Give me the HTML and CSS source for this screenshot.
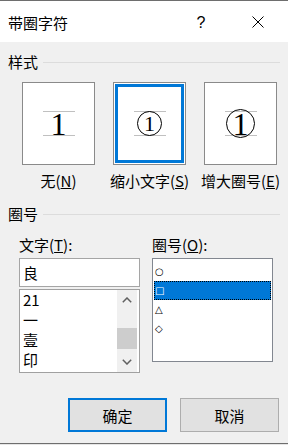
FILE: index.html
```html
<!DOCTYPE html>
<html lang="zh-CN">
<head>
  <meta charset="UTF-8">
  <title>带圈字符</title>
  <link rel="stylesheet" href="styles.css">
</head>
<body>
  <div class="dialog">
    <div class="titlebar">
      <span class="title">带圈字符</span>
      <span class="help">?</span>
      <span class="close">
        <svg width="12" height="12" viewBox="0 0 12 12"><path d="M0.5 0.5 L11.5 11.5 M11.5 0.5 L0.5 11.5" stroke="#000" stroke-width="1" fill="none"/></svg>
      </span>
    </div>

    <div class="content">
      <div class="group-head"><span>样式</span><div class="rule"></div></div>
      <div class="styles">
        <div class="opt">
          <div class="preview">
            <div class="guides"></div>
            <span class="digit big">1</span>
          </div>
          <div class="opt-label">无(<u>N</u>)</div>
        </div>
        <div class="opt">
          <div class="preview selected">
            <div class="guides"></div>
            <span class="ring small"></span>
            <span class="digit small">1</span>
          </div>
          <div class="opt-label">缩小文字(<u>S</u>)</div>
        </div>
        <div class="opt">
          <div class="preview">
            <div class="guides"></div>
            <span class="ring large"></span>
            <span class="digit big">1</span>
          </div>
          <div class="opt-label">增大圈号(<u>E</u>)</div>
        </div>
      </div>

      <div class="group-head second"><span>圈号</span><div class="rule"></div></div>
      <div class="fields">
        <div class="field">
          <div class="field-label">文字(<u>T</u>):</div>
          <div class="input">良</div>
          <div class="list text-list">
            <ul class="items">
              <li>21</li>
              <li>一</li>
              <li>壹</li>
              <li>印</li>
            </ul>
            <div class="scrollbar">
              <div class="sb-btn">
                <svg width="10" height="6" viewBox="0 0 10 6"><polyline points="0.8,5.2 5,1 9.2,5.2" stroke="#606060" stroke-width="1.5" fill="none"/></svg>
              </div>
              <div class="sb-track"><div class="sb-thumb"></div></div>
              <div class="sb-btn">
                <svg width="10" height="6" viewBox="0 0 10 6"><polyline points="0.8,0.8 5,5 9.2,0.8" stroke="#606060" stroke-width="1.5" fill="none"/></svg>
              </div>
            </div>
          </div>
        </div>
        <div class="field">
          <div class="field-label">圈号(<u>O</u>):</div>
          <ul class="list shape-list">
            <li>○</li>
            <li class="active">□</li>
            <li>△</li>
            <li>◇</li>
          </ul>
        </div>
      </div>

      <div class="buttons">
        <button class="btn default">确定</button>
        <button class="btn">取消</button>
      </div>
    </div>
  </div>
</body>
</html>
```

FILE: styles.css
```css
* {
  box-sizing: border-box;
}
body {
  margin: 0;
  background: #e6e6e6;
  font-family: "Noto Sans CJK SC", sans-serif;
  font-size: 15px;
  color: #000;
}
.dialog {
  width: 288px;
  height: 444px;
  background: #f0f0f0;
  border-top: 1px solid #6e6e6e;
  border-bottom: 1px solid #6e6e6e;
}
.titlebar {
  height: 41px;
  background: #fff;
  display: flex;
  align-items: center;
  padding-top: 3px;
}
.title {
  flex: 1;
  padding-left: 8px;
  line-height: 20px;
}
.help {
  width: 30px;
  text-align: center;
  font-family: "Liberation Sans", sans-serif;
  font-size: 16px;
  margin-right: 27px;
  line-height: 20px;
}
.close {
  width: 30px;
  display: flex;
  justify-content: center;
  margin-right: 15px;
  margin-top: -2px;
}
.content {
  padding: 0 8px;
}
.group-head {
  display: flex;
  align-items: center;
  height: 20px;
  line-height: 20px;
  margin-top: 10px;
}
.group-head.second {
  margin-top: 13px;
}
.rule {
  flex: 1;
  height: 1px;
  background: #dcdcdc;
  margin-left: 5px;
}
.styles {
  display: flex;
  gap: 18px;
  margin-top: 10px;
  padding-left: 14px;
}
.opt {
  width: 73px;
  display: flex;
  flex-direction: column;
  align-items: center;
}
.preview {
  width: 73px;
  height: 83px;
  background: #fff;
  border: 1px solid #8a8a8a;
  display: grid;
  place-items: center;
}
.preview.selected {
  box-shadow: inset 0 0 0 1px #fff, inset 0 0 0 4px #0078d7;
}
.preview > * {
  grid-area: 1 / 1;
}
.guides {
  width: 32px;
  height: 25px;
  border-top: 1px solid #c0c0c0;
  border-bottom: 1px solid #c0c0c0;
}
.digit {
  font-family: "Liberation Serif", serif;
  line-height: 1;
}
.digit.big {
  font-size: 32px;
}
.digit.small {
  font-size: 22px;
}
.ring {
  border: 1px solid #000;
  border-radius: 50%;
}
.ring.small {
  width: 25px;
  height: 25px;
}
.ring.large {
  width: 29px;
  height: 29px;
}
.opt-label {
  margin-top: 6px;
  line-height: 20px;
  white-space: nowrap;
}
.fields {
  display: flex;
  gap: 12px;
  margin-top: 11px;
  padding-left: 11px;
  align-items: flex-start;
}
.field {
  width: 121px;
}
.field-label {
  line-height: 20px;
  margin-bottom: 3px;
}
.input {
  height: 29px;
  background: #fff;
  border: 1px solid #a5a5a5;
  padding-left: 3px;
  line-height: 27px;
}
.list {
  background: #fff;
  margin: 0;
  list-style: none;
}
.text-list {
  margin-top: 2px;
  height: 84px;
  border: 1px solid #a0a0a0;
  display: flex;
}
.items {
  flex: 1;
  list-style: none;
  margin: 0;
  padding: 0 0 0 3px;
}
.items li {
  height: 20px;
  line-height: 20px;
}
.scrollbar {
  width: 20px;
  margin-right: 2px;
  background: #f0f0f0;
  display: flex;
  flex-direction: column;
}
.sb-btn {
  height: 20px;
  display: grid;
  place-items: center;
}
.sb-track {
  flex: 1;
  padding-top: 18px;
}
.sb-thumb {
  height: 21px;
  background: #cdcdcd;
}
.shape-list {
  height: 104px;
  border: 1px solid #828790;
  padding: 3px 0 0 0;
}
.shape-list li {
  height: 19px;
  line-height: 19px;
  padding-left: 1px;
  margin: 0 1px;
  font-family: "DejaVu Sans", sans-serif;
  font-size: 10px;
  font-weight: bold;
}
.shape-list li.active {
  background: #0078d7;
  color: #fff;
  outline: 1px dotted #000;
  outline-offset: -1px;
}
.buttons {
  display: flex;
  justify-content: flex-end;
  gap: 13px;
  margin-top: 25px;
  padding-right: 1px;
}
.btn {
  width: 99px;
  height: 34px;
  background: #e1e1e1;
  border: 1px solid #adadad;
  font-family: "Noto Sans CJK SC", sans-serif;
  font-size: 15px;
  color: #000;
  padding: 0;
}
.btn.default {
  border: 2px solid #0078d7;
}
```
